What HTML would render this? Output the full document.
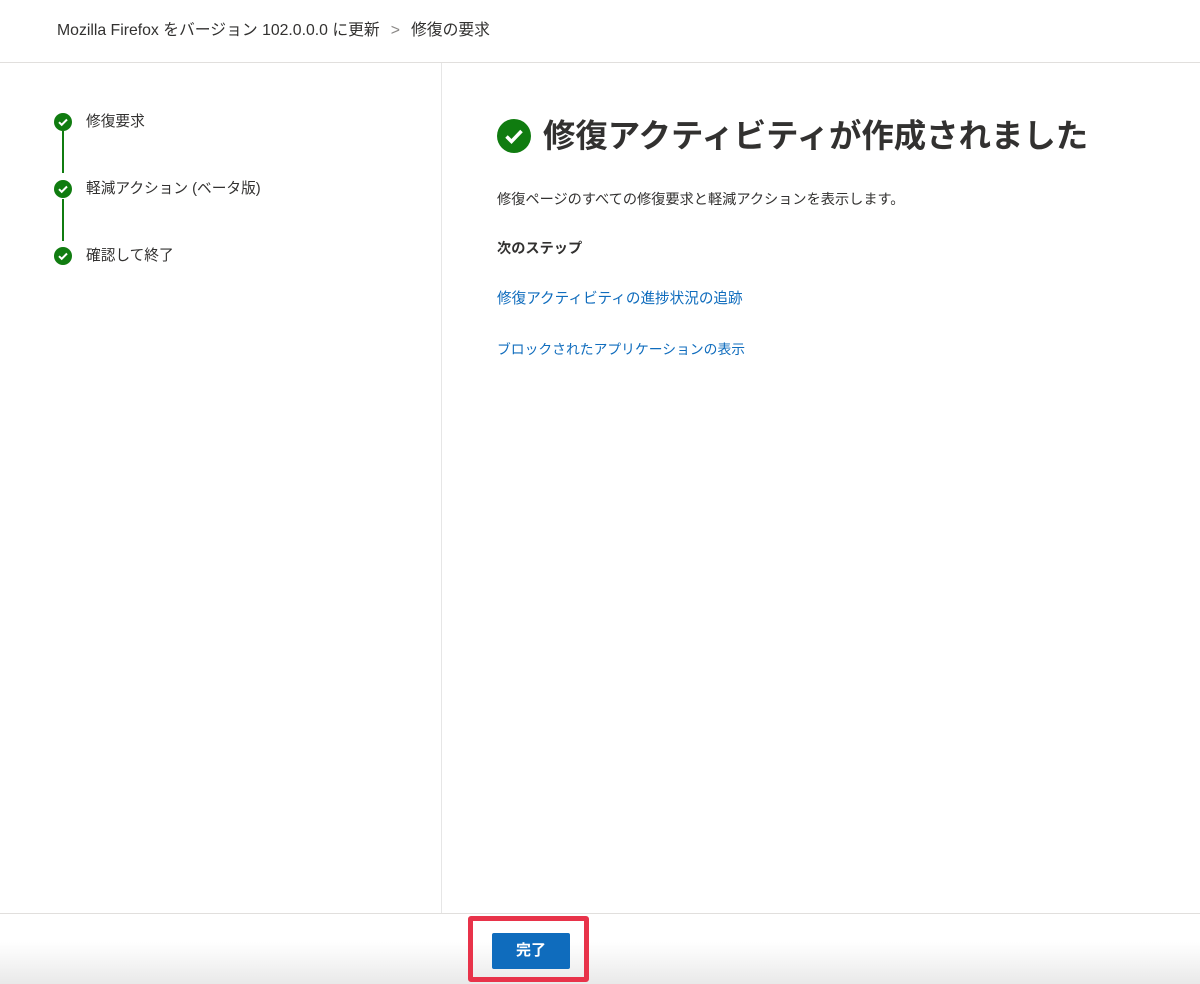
<!DOCTYPE html>
<html><head><meta charset="utf-8"><style>
*{margin:0;padding:0;box-sizing:border-box}
body{width:1200px;height:984px;background:#fff;font-family:"Liberation Sans","Noto Sans CJK JP",sans-serif;color:#323130;position:relative;overflow:hidden}
.bc{position:absolute;left:57px;top:20px;font-size:15.8px;color:#323130;line-height:22px;white-space:nowrap}
.bc .sep{color:#8a8886;margin:0 11px}
.hr{position:absolute;left:0;top:62px;width:1200px;height:1px;background:#e1dfdd}
.vr{position:absolute;left:441px;top:63px;width:1px;height:850px;background:#e6e6e6}
.step{position:absolute;left:54px;font-size:14.7px;line-height:20px}
.step svg{position:absolute;left:0;top:1px}
.step span{position:absolute;left:32px;top:0;white-space:nowrap}
.line{position:absolute;left:62px;width:2px;background:#107c10}
h1{position:absolute;left:497px;top:114px;font-size:32.4px;font-weight:bold;color:#323130;line-height:44px;white-space:nowrap}
h1 svg{position:absolute;left:0;top:5px}
h1 span{margin-left:46px}
.p{position:absolute;left:497px;font-size:14.2px;line-height:20px;white-space:nowrap}
a{color:#0f6cbd;text-decoration:none}
.foot{position:absolute;left:0;top:913px;width:1200px;height:71px;border-top:1px solid #e1dfdd;background:linear-gradient(#fff 0%,#fff 40%,#e9e9e9 100%)}
.red{position:absolute;left:468px;top:916px;width:121px;height:66px;border:5px solid #e8334a;border-radius:3px}
.btn{position:absolute;left:492px;top:933px;width:78px;height:36px;background:#0f6cbd;color:#fff;font-weight:bold;font-size:15px;text-align:center;line-height:36px;border-radius:2px}
</style></head><body>
<div class="bc">Mozilla Firefox をバージョン 102.0.0.0 に更新<span class="sep">&gt;</span>修復の要求</div>
<div class="hr"></div>
<div class="vr"></div>
<div class="line" style="top:131px;height:42px"></div>
<div class="line" style="top:199px;height:42px"></div>
<div class="step" style="top:112px"><svg width="18" height="18" viewBox="0 0 18 18"><circle cx="9" cy="9" r="9" fill="#107c10"/><path d="M5 9.2l2.7 2.6L13 6.5" stroke="#fff" stroke-width="2" fill="none"/></svg><span>修復要求</span></div>
<div class="step" style="top:179px"><svg width="18" height="18" viewBox="0 0 18 18"><circle cx="9" cy="9" r="9" fill="#107c10"/><path d="M5 9.2l2.7 2.6L13 6.5" stroke="#fff" stroke-width="2" fill="none"/></svg><span>軽減アクション (ベータ版)</span></div>
<div class="step" style="top:246px"><svg width="18" height="18" viewBox="0 0 18 18"><circle cx="9" cy="9" r="9" fill="#107c10"/><path d="M5 9.2l2.7 2.6L13 6.5" stroke="#fff" stroke-width="2" fill="none"/></svg><span>確認して終了</span></div>
<h1><svg width="34" height="34" viewBox="0 0 34 34"><circle cx="17" cy="17" r="17" fill="#107c10"/><path d="M9.5 17.5l5 5L24.5 12" stroke="#fff" stroke-width="3.5" fill="none"/></svg><span>修復アクティビティが作成されました</span></h1>
<div class="p" style="top:190px">修復ページのすべての修復要求と軽減アクションを表示します。</div>
<div class="p" style="top:239px;font-weight:bold">次のステップ</div>
<div class="p" style="top:289px;font-size:14.6px"><a>修復アクティビティの進捗状況の追跡</a></div>
<div class="p" style="top:340px;font-size:13.8px"><a>ブロックされたアプリケーションの表示</a></div>
<div class="foot"></div>
<div class="red"></div>
<div class="btn">完了</div>
</body></html>
